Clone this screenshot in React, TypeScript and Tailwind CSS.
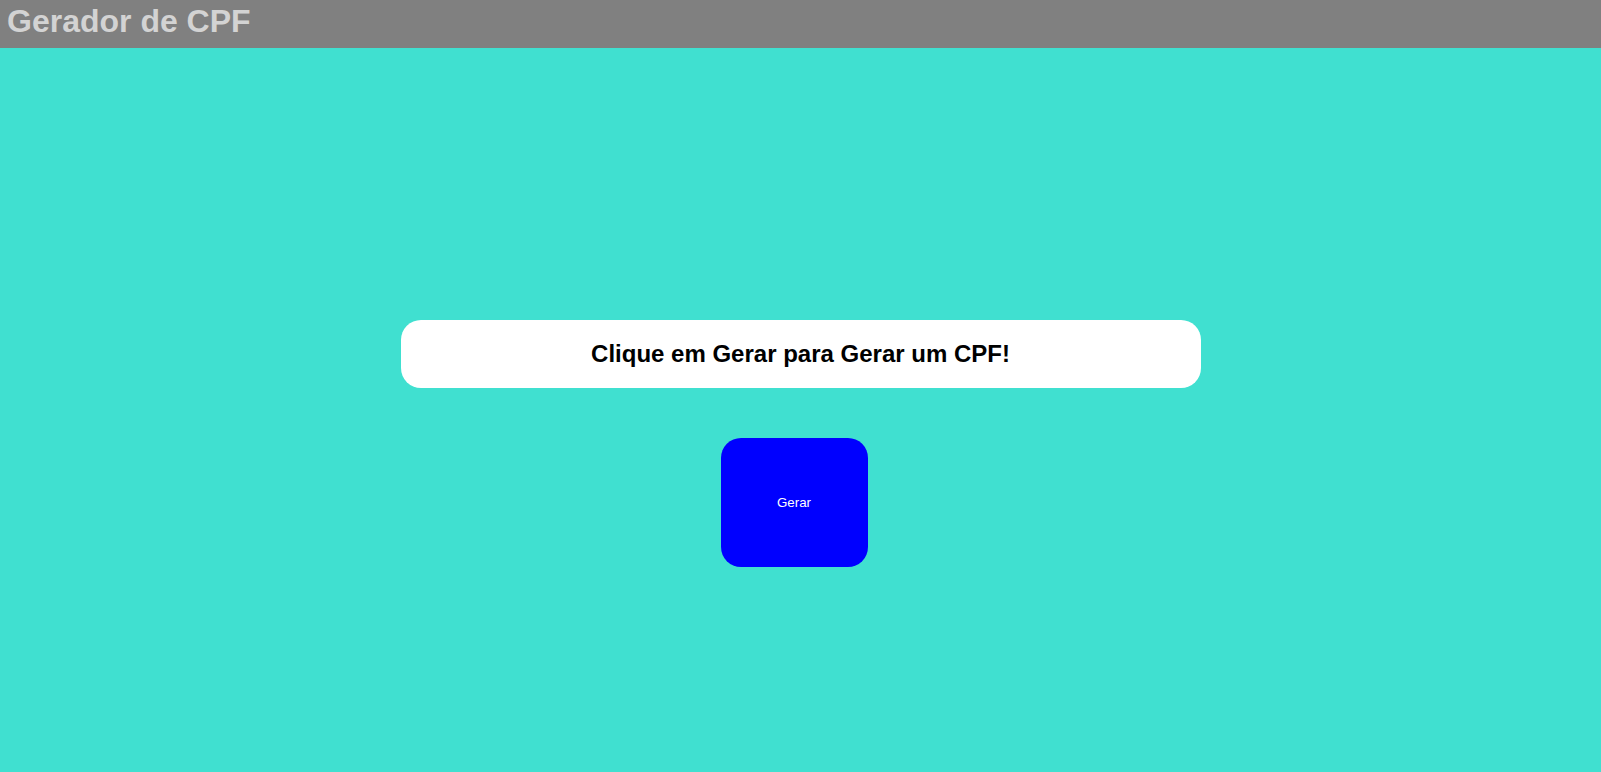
import { useState } from "react";

function gerarCpf() {
  const n = Array.from({ length: 9 }, () => Math.floor(Math.random() * 10));

  const dv = (digits: number[]) => {
    const sum = digits.reduce(
      (acc, d, i) => acc + d * (digits.length + 1 - i),
      0
    );
    const r = (sum * 10) % 11;
    return r === 10 ? 0 : r;
  };

  const d1 = dv(n);
  const d2 = dv([...n, d1]);
  const s = [...n, d1, d2].join("");

  return `${s.slice(0, 3)}.${s.slice(3, 6)}.${s.slice(6, 9)}-${s.slice(9)}`;
}

export default function App() {
  const [cpf, setCpf] = useState("");

  return (
    <div className="flex min-h-[772px] flex-col bg-[#40E0D0] font-['Liberation_Sans',Arial,sans-serif]">
      {/* HEADER */}
      <header className="h-[48px] bg-[#808080] pl-[7px] pt-[3px]">
        <h1 className="text-[32px] font-bold leading-[37px] text-[#D3D3D3]">
          Gerador de CPF
        </h1>
      </header>

      {/* CONTEUDO */}
      <main className="flex flex-col items-center pt-[272px]">
        <div className="flex h-[68px] w-[800px] items-center justify-center rounded-[20px] bg-white">
          <h2 className="text-[24px] font-bold leading-[28px] text-black">
            {cpf ? cpf : "Clique em Gerar para Gerar um CPF!"}
          </h2>
        </div>

        <div className="mt-[50px] flex w-[800px]">
          <button
            type="button"
            onClick={() => setCpf(gerarCpf())}
            className="ml-[320px] flex h-[129px] w-[147px] items-center justify-center rounded-[20px] bg-[#0000FF] text-[13.33px] text-white"
          >
            Gerar
          </button>
        </div>
      </main>
    </div>
  );
}
